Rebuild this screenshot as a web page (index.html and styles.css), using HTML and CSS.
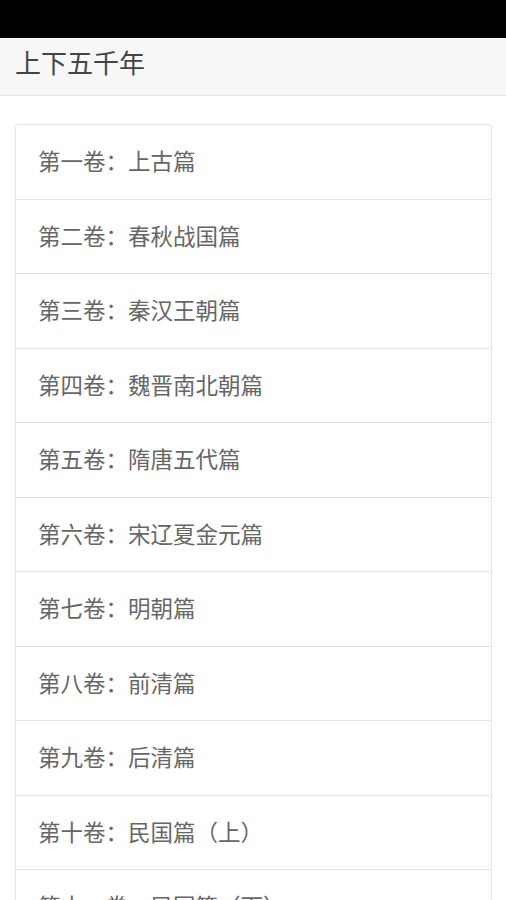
FILE: index.html
```html
<!doctype html>
<html>
<head>
<meta charset="utf-8">
<title>上下五千年</title>
<link rel="stylesheet" href="styles.css">
</head>
<body>
	<div class="statusbar"></div>
	<div class="header">
		<h1 class="title">上下五千年</h1>
	</div>
	<ul class="volumes">
		<li>第一卷：上古篇</li>
		<li>第二卷：春秋战国篇</li>
		<li>第三卷：秦汉王朝篇</li>
		<li>第四卷：魏晋南北朝篇</li>
		<li>第五卷：隋唐五代篇</li>
		<li>第六卷：宋辽夏金元篇</li>
		<li>第七卷：明朝篇</li>
		<li>第八卷：前清篇</li>
		<li>第九卷：后清篇</li>
		<li>第十卷：民国篇（上）</li>
		<li>第十一卷：民国篇（下）</li>
		<li>第十二卷：新中国篇</li>
	</ul>
</body>
</html>
```

FILE: styles.css
```css
*{
	margin:0;
	padding:0;
	list-style:none;
	box-sizing:border-box;
}
html,body{
	height:100%;
	overflow:hidden;
}
body{
	background:#fff;
	font-family:"Noto Sans CJK SC","Noto Sans",sans-serif;
}
.statusbar{
	height:38px;
	background:#000;
}
.header{
	height:58px;
	background:#f7f7f7;
	border-bottom:1px solid #e6e6e6;
	padding-left:15px;
}
.title{
	font-size:26px;
	font-weight:normal;
	color:#444;
	line-height:47px;
}
.volumes{
	margin:28px 15px 0 15px;
	width:477px;
	border:1px solid #e3e3e3;
	border-radius:3px;
}
.volumes li{
	height:74.56px;
	line-height:70px;
	padding-left:22px;
	font-size:22.5px;
	color:#666;
	border-bottom:1px solid #e3e3e3;
}
.volumes li:last-child{
	border-bottom:none;
}
```
